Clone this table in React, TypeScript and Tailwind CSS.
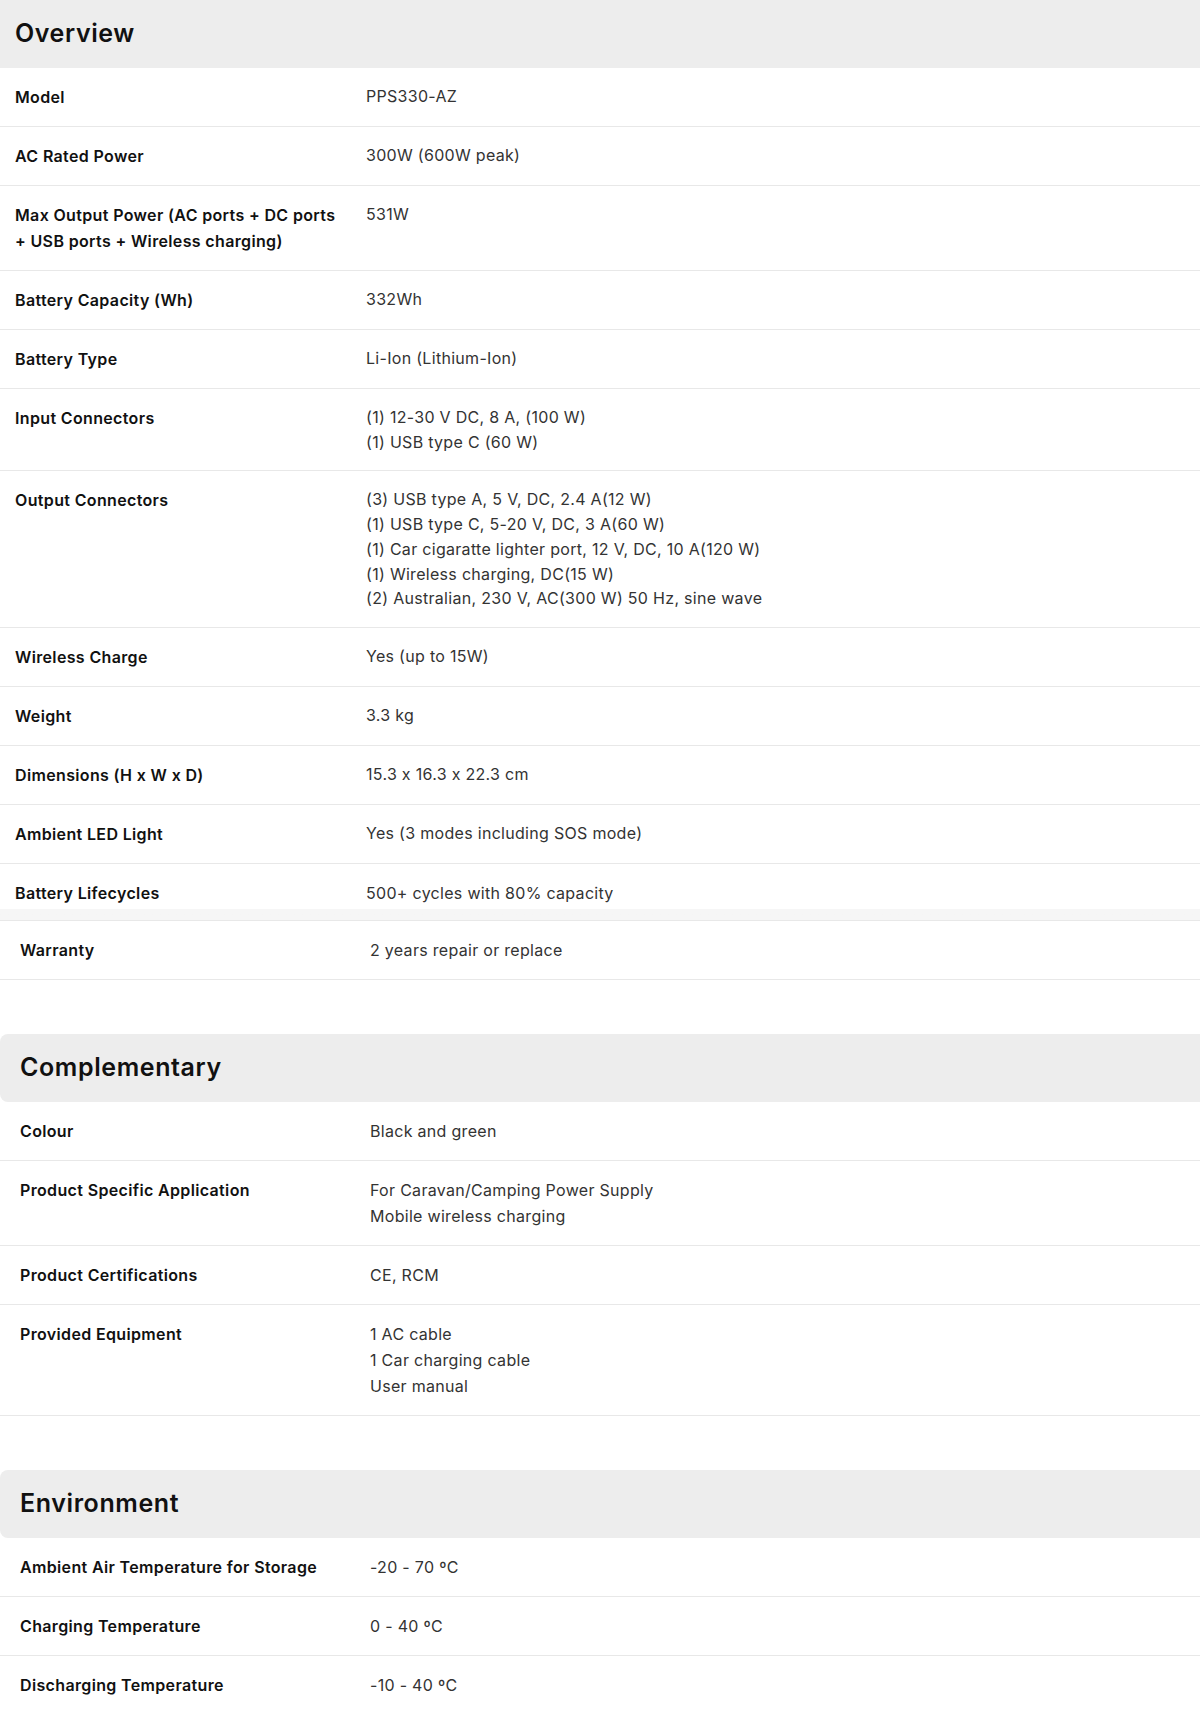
import React from "react";

type Spec = {
  label: React.ReactNode;
  values: string[];
};

const overview: Spec[] = [
  { label: "Model", values: ["PPS330-AZ"] },
  { label: "AC Rated Power", values: ["300W (600W peak)"] },
  {
    label: (
      <>
        Max Output Power (AC ports + DC ports
        <br />+ USB ports + Wireless charging)
      </>
    ),
    values: ["531W"],
  },
  { label: "Battery Capacity (Wh)", values: ["332Wh"] },
  { label: "Battery Type", values: ["Li-Ion (Lithium-Ion)"] },
  {
    label: "Input Connectors",
    values: ["(1) 12-30 V DC, 8 A, (100 W)", "(1) USB type C (60 W)"],
  },
  {
    label: "Output Connectors",
    values: [
      "(3) USB type A, 5 V, DC, 2.4 A(12 W)",
      "(1) USB type C, 5-20 V, DC, 3 A(60 W)",
      "(1) Car cigaratte lighter port, 12 V, DC, 10 A(120 W)",
      "(1) Wireless charging, DC(15 W)",
      "(2) Australian, 230 V, AC(300 W) 50 Hz, sine wave",
    ],
  },
  { label: "Wireless Charge", values: ["Yes (up to 15W)"] },
  { label: "Weight", values: ["3.3 kg"] },
  { label: "Dimensions (H x W x D)", values: ["15.3 x 16.3 x 22.3 cm"] },
  { label: "Ambient LED Light", values: ["Yes (3 modes including SOS mode)"] },
];

const complementary: Spec[] = [
  { label: "Colour", values: ["Black and green"] },
  {
    label: "Product Specific Application",
    values: ["For Caravan/Camping Power Supply", "Mobile wireless charging"],
  },
  { label: "Product Certifications", values: ["CE, RCM"] },
  {
    label: "Provided Equipment",
    values: ["1 AC cable", "1 Car charging cable", "User manual"],
  },
];

const environment: Spec[] = [
  { label: "Ambient Air Temperature for Storage", values: ["-20 - 70 ºC"] },
  { label: "Charging Temperature", values: ["0 - 40 ºC"] },
  { label: "Discharging Temperature", values: ["-10 - 40 ºC"] },
];

const Row = ({
  spec,
  tight,
  shift,
  last,
}: {
  spec: Spec;
  tight?: boolean;
  shift?: boolean;
  last?: boolean;
}) => (
  <div
    className={`grid py-4 ${last ? "" : "border-b border-[#e8e8e8]"} ${
      shift ? "grid-cols-[350px_1fr] px-[20px]" : "grid-cols-[351px_1fr] px-[15px]"
    }`}
  >
    <div className="text-[16px] leading-[26px] font-semibold tracking-[0.35px] text-[#111]">
      {spec.label}
    </div>
    <div
      className={`text-[16px] tracking-[0.3px] text-[#333] ${
        tight ? "leading-[24.7px]" : "leading-[26px]"
      }`}
    >
      {spec.values.map((v, i) => (
        <div key={i}>{v}</div>
      ))}
    </div>
  </div>
);

const SectionHeader = ({
  title,
  rounded,
}: {
  title: string;
  rounded?: boolean;
}) => (
  <div
    className={`flex h-[68px] items-center bg-[#ededed] ${
      rounded ? "rounded-l-lg px-[20px]" : "px-[15px]"
    }`}
  >
    <h2 className="text-[25px] font-semibold tracking-[0.6px] text-[#111]">
      {title}
    </h2>
  </div>
);

export default function App() {
  return (
    <div
      className="w-[1200px] bg-white [font-feature-settings:'calt'_0]"
      style={{ fontFamily: "Inter, 'Noto Sans', sans-serif" }}
    >
      {/* Overview */}
      <SectionHeader title="Overview" />
      {overview.map((spec, i) => (
        <Row key={i} spec={spec} tight />
      ))}

      {/* Lifecycles row has a faint band at the bottom */}
      <div className="grid grid-cols-[351px_1fr] border-b border-[#e8e8e8] bg-gradient-to-b from-white from-80% to-[#f6f6f6] to-80% px-[15px] pt-4 pb-[14px]">
        <div className="text-[16px] leading-[26px] font-semibold tracking-[0.35px] text-[#111]">
          Battery Lifecycles
        </div>
        <div className="text-[16px] leading-[26px] tracking-[0.3px] text-[#333]">
          500+ cycles with 80% capacity
        </div>
      </div>
      <Row spec={{ label: "Warranty", values: ["2 years repair or replace"] }} shift />

      {/* Complementary */}
      <div className="mt-[54px]">
        <SectionHeader title="Complementary" rounded />
        {complementary.map((spec, i) => (
          <Row key={i} spec={spec} shift />
        ))}
      </div>

      {/* Environment */}
      <div className="mt-[54px]">
        <SectionHeader title="Environment" rounded />
        {environment.map((spec, i) => (
          <Row key={i} spec={spec} shift last={i === environment.length - 1} />
        ))}
      </div>
    </div>
  );
}
